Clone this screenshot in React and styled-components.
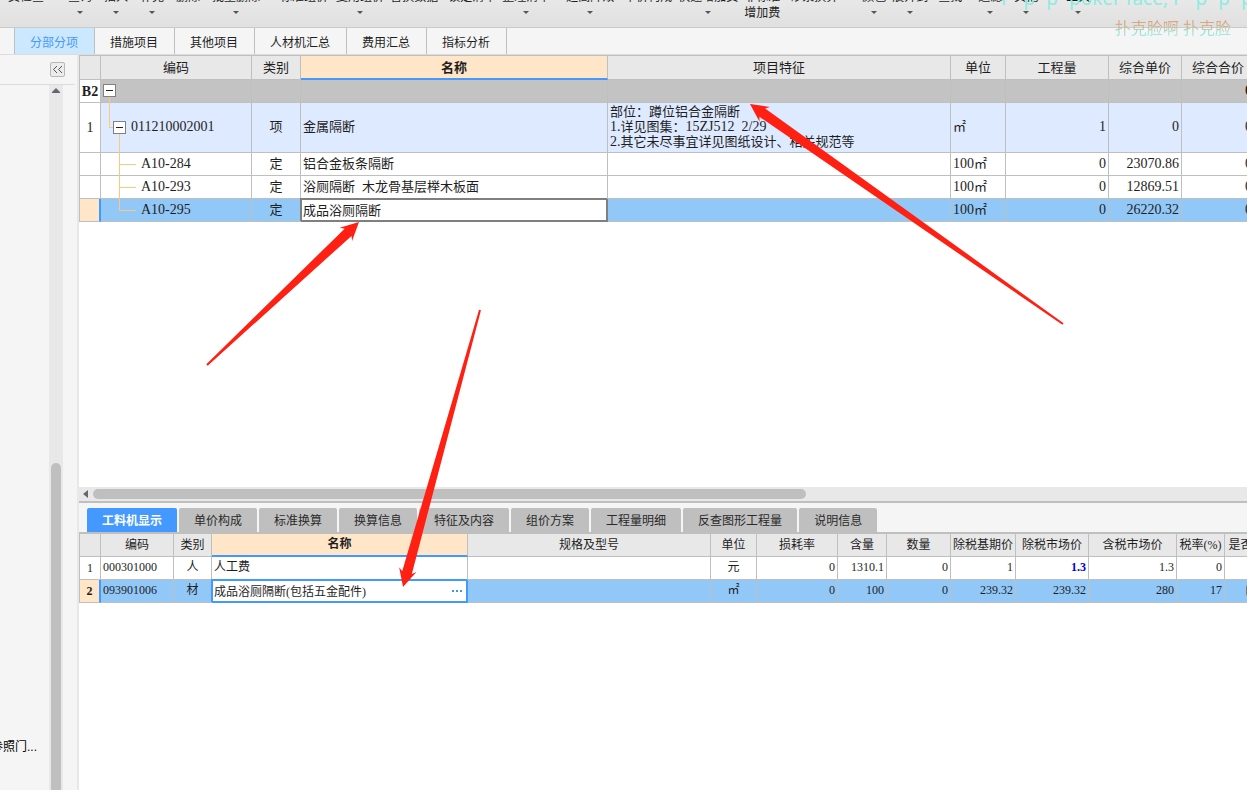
import React from "react";
import styled, { createGlobalStyle, css } from "styled-components";

const GlobalStyle = createGlobalStyle`
  * {
    box-sizing: border-box;
  }

  body {
    margin: 0;
    background: #fff;
    color: #1e1e1e;
    font: 12px/16px "Liberation Sans", "Noto Sans CJK SC", sans-serif;
  }

  button,
  input {
    font: inherit;
    color: inherit;
    border: 0;
    border-radius: 0;
    padding: 0;
    margin: 0;
    background: none;
  }
`;

const Page = styled.div`
  position: relative;
  display: flex;
  flex-direction: column;
  height: 100vh;
  overflow: hidden;
`;

/* ---------- ribbon ---------- */

const Ribbon = styled.div`
  display: flex;
  align-items: flex-start;
  height: 28px;
  flex: none;
  overflow: hidden;
  background: linear-gradient(#e8e8e8, #e0e0e0);
  border-bottom: 1px solid #cacaca;
`;

const RibbonButton = styled.button`
  display: flex;
  flex-direction: column;
  align-items: center;
  flex: none;
  margin-top: -11px;
  margin-left: ${p => p.$gap}px;
  white-space: pre;
`;

const Caret = styled.span`
  margin-top: 6px;
  border: 3px solid transparent;
  border-top-color: #555;
  border-bottom: 0;
`;

const ribbonItems = [
  { label: "费检查", gap: 8 },
  { label: "查询", gap: 24, menu: true },
  { label: "插入", gap: 12, menu: true },
  { label: "补充", gap: 12, menu: true },
  { label: "删除", gap: 12 },
  { label: "批量删除", gap: 12, menu: true },
  { label: "标准组价", gap: 20 },
  { label: "复用组价", gap: 8, menu: true },
  { label: "替换数据", gap: 6 },
  { label: "锁定清单", gap: 10 },
  { label: "整理清单", gap: 6, menu: true },
  { label: "超高降效", gap: 16, menu: true },
  { label: "单价构成", gap: 10 },
  { label: "快速增加费", gap: 6, menu: true },
  { label: "非标准\n增加费", gap: 6 },
  { label: "砂浆换算", gap: 10 },
  { label: "颜色", gap: 24, menu: true },
  { label: "展开到", gap: 6, menu: true },
  { label: "查找", gap: 10 },
  { label: "过滤", gap: 16, menu: true },
  { label: "其他", gap: 12, menu: true },
  { label: "工具", gap: 28, menu: true }
];

/* ---------- main tabs ---------- */

const MainTabs = styled.nav`
  display: flex;
  flex: none;
  height: 27px;
  padding-left: 14px;
  background: #f5f5f5;
  border-bottom: 1px solid #dcdcdc;
`;

const MainTab = styled.button`
  padding: 3px 16px 0 15px;
  border-right: 1px solid #bfbfbf;

  &:first-child {
    border-left: 1px solid #bfbfbf;
  }

  ${p =>
    p.$active &&
    css`
      background: #cce8ff;
      color: #4399ff;
    `}
`;

/* ---------- side panel ---------- */

const Body = styled.div`
  display: flex;
  flex: 1;
  min-height: 0;
`;

const Side = styled.aside`
  display: flex;
  flex-direction: column;
  flex: none;
  width: 79px;
  background: #f5f5f5;
  border-right: 2px solid #e8e8e8;
`;

const SideHead = styled.div`
  display: flex;
  justify-content: flex-end;
  align-items: center;
  height: 30px;
  margin-right: 2px;
  padding-right: 10px;
  border-bottom: 1px solid #dcdcdc;
`;

const CollapseButton = styled.button`
  display: flex;
  align-items: center;
  justify-content: center;
  width: 15px;
  height: 15px;
  border: 1px solid #b8b8b8;
  border-radius: 2px;
  background: #ececec;
`;

const SideBody = styled.div`
  display: flex;
  flex: 1;
  min-height: 0;
  padding-right: 14px;
`;

const SideTree = styled.div`
  display: flex;
  flex: 1;
  justify-content: flex-end;
  align-items: flex-end;
  overflow: hidden;
  white-space: nowrap;
  padding: 0 12px 35px 0;
  color: #000;
`;

const VerticalTrack = styled.div`
  display: flex;
  flex-direction: column;
  align-items: center;
  width: 14px;
  padding-top: 3px;
  background: #e8e8e8;
`;

const VerticalThumb = styled.div`
  flex: 328;
  width: 10px;
  border-radius: 5px 5px 0 0;
  background: #bfbfbf;
`;

const Spacer = styled.div`
  flex: ${p => p.$grow};
`;

/* ---------- panes ---------- */

const Panes = styled.main`
  display: grid;
  grid-template-rows: 1fr 287px;
  flex: 1;
  min-width: 0;
`;

const Pane = styled.section`
  display: flex;
  flex-direction: column;
  min-width: 0;
  min-height: 0;
  background: #fff;
`;

const GridScroll = styled.div`
  flex: 1;
  min-height: 0;
  overflow: hidden;
  border-top: 1px solid #bfbfbf;
`;

const HorizontalTrack = styled.div`
  display: flex;
  align-items: center;
  height: 16px;
  flex: none;
  padding-left: 4px;
  background: #e8e8e8;
  border-bottom: 2px solid #bfbfbf;
`;

const HorizontalThumb = styled.div`
  flex: 713;
  height: 10px;
  margin-left: 5px;
  border-radius: 5px;
  background: #bfbfbf;
`;

const DetailTabs = styled.nav`
  display: flex;
  gap: 2px;
  flex: none;
  height: 30px;
  padding: 5px 8px 0;
  background: #f5f5f5;
  border-bottom: 1px solid #bfbfbf;
`;

const DetailTab = styled.button`
  padding: 2px 15px 0;
  border-radius: 2px 2px 0 0;
  background: ${p => (p.$active ? "#4399ff" : "#bfbfbf")};
  color: ${p => (p.$active ? "#fff" : "#2a2a2a")};
  font-weight: ${p => (p.$active ? "bold" : "normal")};
`;

/* ---------- data grid ---------- */

const DataGrid = styled.table`
  table-layout: fixed;
  width: 0;
  border-collapse: separate;
  border-spacing: 0;
  border-left: 1px solid #bfbfbf;
  font-family: "Liberation Serif", "Noto Sans CJK SC", serif;
  font-size: ${p => p.$size}px;
  line-height: 15px;
`;

const HeadCell = styled.th`
  height: ${p => p.$height}px;
  padding: 0;
  overflow: hidden;
  white-space: nowrap;
  font-weight: ${p => (p.$active ? "bold" : "normal")};
  background: ${p => (p.$active ? "#ffe6c8" : "#e8e8e8")};
  border-right: 1px solid #bfbfbf;
  border-bottom: ${p => (p.$active ? "2px solid #4399ff" : "1px solid #bfbfbf")};
`;

const rowColors = {
  group: "#c3c3c3",
  item: "#deeaff",
  selected: "#92c8f8"
};

const Row = styled.tr`
  height: ${p => p.$height || 23}px;
  background: ${p => rowColors[p.$kind] || "#fff"};
`;

const Cell = styled.td`
  padding: 0 2px 2px;
  overflow: hidden;
  white-space: pre;
  text-align: ${p => p.$align || "left"};
  border-right: 1px solid #bfbfbf;
  border-bottom: 1px solid #bfbfbf;

  ${p =>
    p.$number &&
    css`
      font-family: "Liberation Serif", serif;
      font-size: ${p.$number}px;
    `}

  ${p =>
    p.$edited &&
    css`
      color: #0000e6;
      font-weight: bold;
    `}
`;

const IndexCell = styled.th`
  padding: 0;
  background: ${p => (p.$current ? "#ffe6c8" : "#fff")};
  border-right: ${p => (p.$current ? "2px solid #4399ff" : "1px solid #bfbfbf")};
  border-bottom: 1px solid #bfbfbf;
  font-weight: ${p => (p.$bold ? "bold" : "normal")};
`;

const TreeCell = styled.td`
  padding: 0;
  border-right: 1px solid #bfbfbf;
  border-bottom: 1px solid #bfbfbf;
  font-size: 14px;
`;

const TreeLine = styled.div`
  display: flex;
  align-items: center;

  svg {
    flex: none;
    overflow: visible;
  }
`;

const TreeCode = styled.span`
  padding-bottom: 2px;
`;

const LatinText = styled.span`
  font-size: 14px;
  line-height: 0;
`;

const EditorCell = styled.td`
  position: relative;
  padding: 0;
  background: #fff;
  border: solid ${p => p.$color};
  border-width: 1px 2px 2px 1px;
  box-shadow: -1px -1px 0 ${p => p.$color};
`;

const Editor = styled.div`
  display: flex;
  align-items: center;
  padding: 0 3px 1px 1px;

  input {
    flex: 1;
    min-width: 0;
    height: 17px;
    outline: 0;
  }

  button {
    display: flex;
  }
`;

const CheckBox = styled.input`
  display: block;
  width: 13px;
  height: 13px;
  margin: 0 auto;
`;

/* ---------- overlays ---------- */

const Annotations = styled.svg`
  position: absolute;
  top: 0;
  left: 0;
  overflow: visible;
  pointer-events: none;
`;

const Watermark = styled.div`
  position: absolute;
  top: -14px;
  left: 1001px;
  right: 0;
  overflow: hidden;
  white-space: nowrap;
  pointer-events: none;
  font: 19px/24px "Noto Sans", sans-serif;
  color: #8eebe0;
`;

const WatermarkName = styled.div`
  position: absolute;
  top: 16px;
  right: 16px;
  pointer-events: none;
  font: 16px/24px "Noto Sans", "Noto Sans CJK SC", sans-serif;
  color: transparent;
  background: linear-gradient(#e8915c 20%, #7ff3ec 85%);
  background-clip: text;
  opacity: 0.85;
`;

const Arrow = ({ from, to }) => {
  const length = Math.hypot(from[0] - to[0], from[1] - to[1]);
  const dx = (from[0] - to[0]) / length;
  const dy = (from[1] - to[1]) / length;
  const at = (along, across) =>
    [to[0] + dx * along - dy * across, to[1] + dy * along + dx * across].join();
  const points = [
    at(0, 0),
    at(18, 9),
    at(15, 5),
    at(length, 1),
    at(length, -1),
    at(15, -5),
    at(18, -9)
  ];
  return <polygon points={points.join(" ")} fill="#ff2014" />;
};

const Toggle = ({ x, y }) => (
  <g shapeRendering="crispEdges">
    <rect x={x + 0.5} y={y + 0.5} width="12" height="12" fill="#fff" stroke="#808080" />
    <path d={`M${x + 3} ${y + 6.5}h7`} stroke="#222" />
  </g>
);

const TreeGraphic = ({ kind }) => {
  if (kind === "group") {
    return (
      <svg width="20" height="22">
        <path d="M8.5 17v6" stroke="#ffc680" shapeRendering="crispEdges" />
        <Toggle x={2} y={4} />
      </svg>
    );
  }
  if (kind === "item") {
    return (
      <svg width="30" height="49">
        <path
          d="M8.5 0v24.5h4M18.5 31v19"
          fill="none"
          stroke="#ffc680"
          shapeRendering="crispEdges"
        />
        <Toggle x={12} y={18} />
      </svg>
    );
  }
  return (
    <svg width="40" height="22">
      <path
        d={kind === "selected" ? "M18.5 0v11.5h16" : "M18.5 0v23M18.5 11.5h16"}
        fill="none"
        stroke="#ffc680"
        shapeRendering="crispEdges"
      />
    </svg>
  );
};

// Latin runs are set one size up beside the Chinese text
const Mixed = ({ children = "" }) =>
  children
    .split(/([\w./ ]+)/)
    .map((part, i) => (i % 2 ? <LatinText key={i}>{part}</LatinText> : part));

const billColumns = [
  { title: "", width: 21 },
  { title: "编码", width: 151 },
  { title: "类别", width: 49 },
  { title: "名称", width: 307, active: true },
  { title: "项目特征", width: 343 },
  { title: "单位", width: 55 },
  { title: "工程量", width: 103 },
  { title: "综合单价", width: 73 },
  { title: "综合合价", width: 73 }
];

const features =
  "部位：蹲位铝合金隔断\n1.详见图集：15ZJ512  2/29\n2.其它未尽事宜详见图纸设计、相关规范等";

const billRows = [
  { index: "B2", kind: "group", code: "", total: "0" },
  {
    index: "1",
    kind: "item",
    code: "011210002001",
    type: "项",
    name: "金属隔断",
    features,
    unit: "㎡",
    amount: "1",
    price: "0",
    total: "0"
  },
  {
    code: "A10-284",
    type: "定",
    name: "铝合金板条隔断",
    unit: "100㎡",
    amount: "0",
    price: "23070.86",
    total: "0"
  },
  {
    code: "A10-293",
    type: "定",
    name: "浴厕隔断  木龙骨基层榉木板面",
    unit: "100㎡",
    amount: "0",
    price: "12869.51",
    total: "0"
  },
  {
    kind: "selected",
    code: "A10-295",
    type: "定",
    name: "成品浴厕隔断",
    unit: "100㎡",
    amount: "0",
    price: "26220.32",
    total: "0"
  }
];

const resourceColumns = [
  { title: "", width: 21 },
  { title: "编码", width: 73 },
  { title: "类别", width: 38 },
  { title: "名称", width: 256, active: true },
  { title: "规格及型号", width: 243 },
  { title: "单位", width: 46 },
  { title: "损耗率", width: 81 },
  { title: "含量", width: 49 },
  { title: "数量", width: 64 },
  { title: "除税基期价", width: 65 },
  { title: "除税市场价", width: 73 },
  { title: "含税市场价", width: 88 },
  { title: "税率(%)", width: 48 },
  { title: "是否暂估", width: 56 }
];

const resourceRows = [
  {
    index: "1",
    code: "000301000",
    type: "人",
    name: "人工费",
    unit: "元",
    values: ["0", "1310.1", "0", "1", "1.3", "1.3", "0"],
    editedAt: 4
  },
  {
    index: "2",
    kind: "selected",
    code: "093901006",
    type: "材",
    name: "成品浴厕隔断(包括五金配件)",
    unit: "㎡",
    values: ["0", "100", "0", "239.32", "239.32", "280", "17"]
  }
];

const GridHead = ({ columns, height }) => (
  <>
    <colgroup>
      {columns.map((c, i) => (
        <col key={i} width={c.width} />
      ))}
    </colgroup>
    <thead>
      <tr>
        {columns.map((c, i) => (
          <HeadCell key={i} $active={c.active} $height={height}>
            {c.title}
          </HeadCell>
        ))}
      </tr>
    </thead>
  </>
);

const BillGrid = () => (
  <DataGrid $size={13}>
    <GridHead columns={billColumns} height={24} />
    <tbody>
      {billRows.map((row, i) => {
        const selected = row.kind === "selected";
        return (
          <Row key={i} $kind={row.kind} $height={row.kind === "item" ? 50 : 23}>
            <IndexCell $current={selected} $bold={row.kind === "group"}>
              <Mixed>{row.index}</Mixed>
            </IndexCell>
            <TreeCell>
              <TreeLine>
                <TreeGraphic kind={row.kind} />
                <TreeCode>{row.code}</TreeCode>
              </TreeLine>
            </TreeCell>
            <Cell $align="center">{row.type}</Cell>
            {selected ? (
              <EditorCell $color="#7f7f7f">
                <Editor>
                  <input aria-label="名称" defaultValue={row.name} />
                </Editor>
              </EditorCell>
            ) : (
              <Cell>
                <Mixed>{row.name}</Mixed>
              </Cell>
            )}
            <Cell>
              <Mixed>{row.features}</Mixed>
            </Cell>
            <Cell>
              <Mixed>{row.unit}</Mixed>
            </Cell>
            <Cell $align="right" $number={14}>{row.amount}</Cell>
            <Cell $align="right" $number={14}>{row.price}</Cell>
            <Cell $align="right" $number={14}>
              {row.kind === "group" ? <b>{row.total}</b> : row.total}
            </Cell>
          </Row>
        );
      })}
    </tbody>
  </DataGrid>
);

const ResourceGrid = () => (
  <DataGrid $size={12}>
    <GridHead columns={resourceColumns} height={23} />
    <tbody>
      {resourceRows.map(row => {
        const selected = row.kind === "selected";
        return (
          <Row key={row.index} $kind={row.kind}>
            <IndexCell $current={selected} $bold={selected}>
              {row.index}
            </IndexCell>
            <Cell $number={12}>{row.code}</Cell>
            <Cell $align="center">{row.type}</Cell>
            {selected ? (
              <EditorCell $color="#4399ff">
                <Editor>
                  <input aria-label="名称" defaultValue={row.name} />
                  <button aria-label="更多">
                    <svg width="12" height="4" fill="#4399d8">
                      <path d="M1 1h2v2h-2zM5 1h2v2h-2zM9 1h2v2h-2z" />
                    </svg>
                  </button>
                </Editor>
              </EditorCell>
            ) : (
              <Cell>{row.name}</Cell>
            )}
            <Cell />
            <Cell $align="center">{row.unit}</Cell>
            {row.values.map((value, i) => (
              <Cell key={i} $align="right" $number={12} $edited={row.editedAt === i}>
                {value}
              </Cell>
            ))}
            <Cell>{selected && <CheckBox type="checkbox" aria-label="是否暂估" />}</Cell>
          </Row>
        );
      })}
    </tbody>
  </DataGrid>
);

const mainTabs = ["分部分项", "措施项目", "其他项目", "人材机汇总", "费用汇总", "指标分析"];

const detailTabs = [
  "工料机显示",
  "单价构成",
  "标准换算",
  "换算信息",
  "特征及内容",
  "组价方案",
  "工程量明细",
  "反查图形工程量",
  "说明信息"
];

const App = () => (
  <Page>
    <GlobalStyle />
    <Ribbon>
      {ribbonItems.map(item => (
        <RibbonButton key={item.label} $gap={item.gap}>
          {item.label}
          {item.menu && <Caret />}
        </RibbonButton>
      ))}
    </Ribbon>
    <MainTabs>
      {mainTabs.map((tab, i) => (
        <MainTab key={tab} $active={i === 0}>
          {tab}
        </MainTab>
      ))}
    </MainTabs>
    <Body>
      <Side>
        <SideHead>
          <CollapseButton aria-label="收起">
            <svg width="11" height="9" fill="none" stroke="#555">
              <path d="M5 1L1.500 4.500L5 8M10 1L6.500 4.500L10 8" />
            </svg>
          </CollapseButton>
        </SideHead>
        <SideBody>
          <SideTree>参照门...</SideTree>
          <VerticalTrack>
            <svg width="8" height="5" fill="#666670">
              <path d="M0 5V4L4 0L8 4V5z" />
            </svg>
            <Spacer $grow={371} />
            <VerticalThumb />
          </VerticalTrack>
        </SideBody>
      </Side>
      <Panes>
        <Pane>
          <GridScroll>
            <BillGrid />
          </GridScroll>
          <HorizontalTrack>
            <svg width="5" height="8" fill="#666670">
              <path d="M5 0L0 4L5 8z" />
            </svg>
            <HorizontalThumb />
            <Spacer $grow={441} />
          </HorizontalTrack>
        </Pane>
        <Pane>
          <DetailTabs>
            {detailTabs.map((tab, i) => (
              <DetailTab key={tab} $active={i === 0}>
                {tab}
              </DetailTab>
            ))}
          </DetailTabs>
          <GridScroll>
            <ResourceGrid />
          </GridScroll>
        </Pane>
      </Panes>
    </Body>
    <Watermark>P- p- p- poker face, P- p- p- p</Watermark>
    <WatermarkName>扑克脸啊 扑克脸</WatermarkName>
    <Annotations width="1" height="1" aria-hidden="true">
      <Arrow from={[207, 365]} to={[359, 222]} />
      <Arrow from={[1063, 324]} to={[750, 104]} />
      <Arrow from={[480, 310]} to={[403, 587]} />
    </Annotations>
  </Page>
);

export default App;
